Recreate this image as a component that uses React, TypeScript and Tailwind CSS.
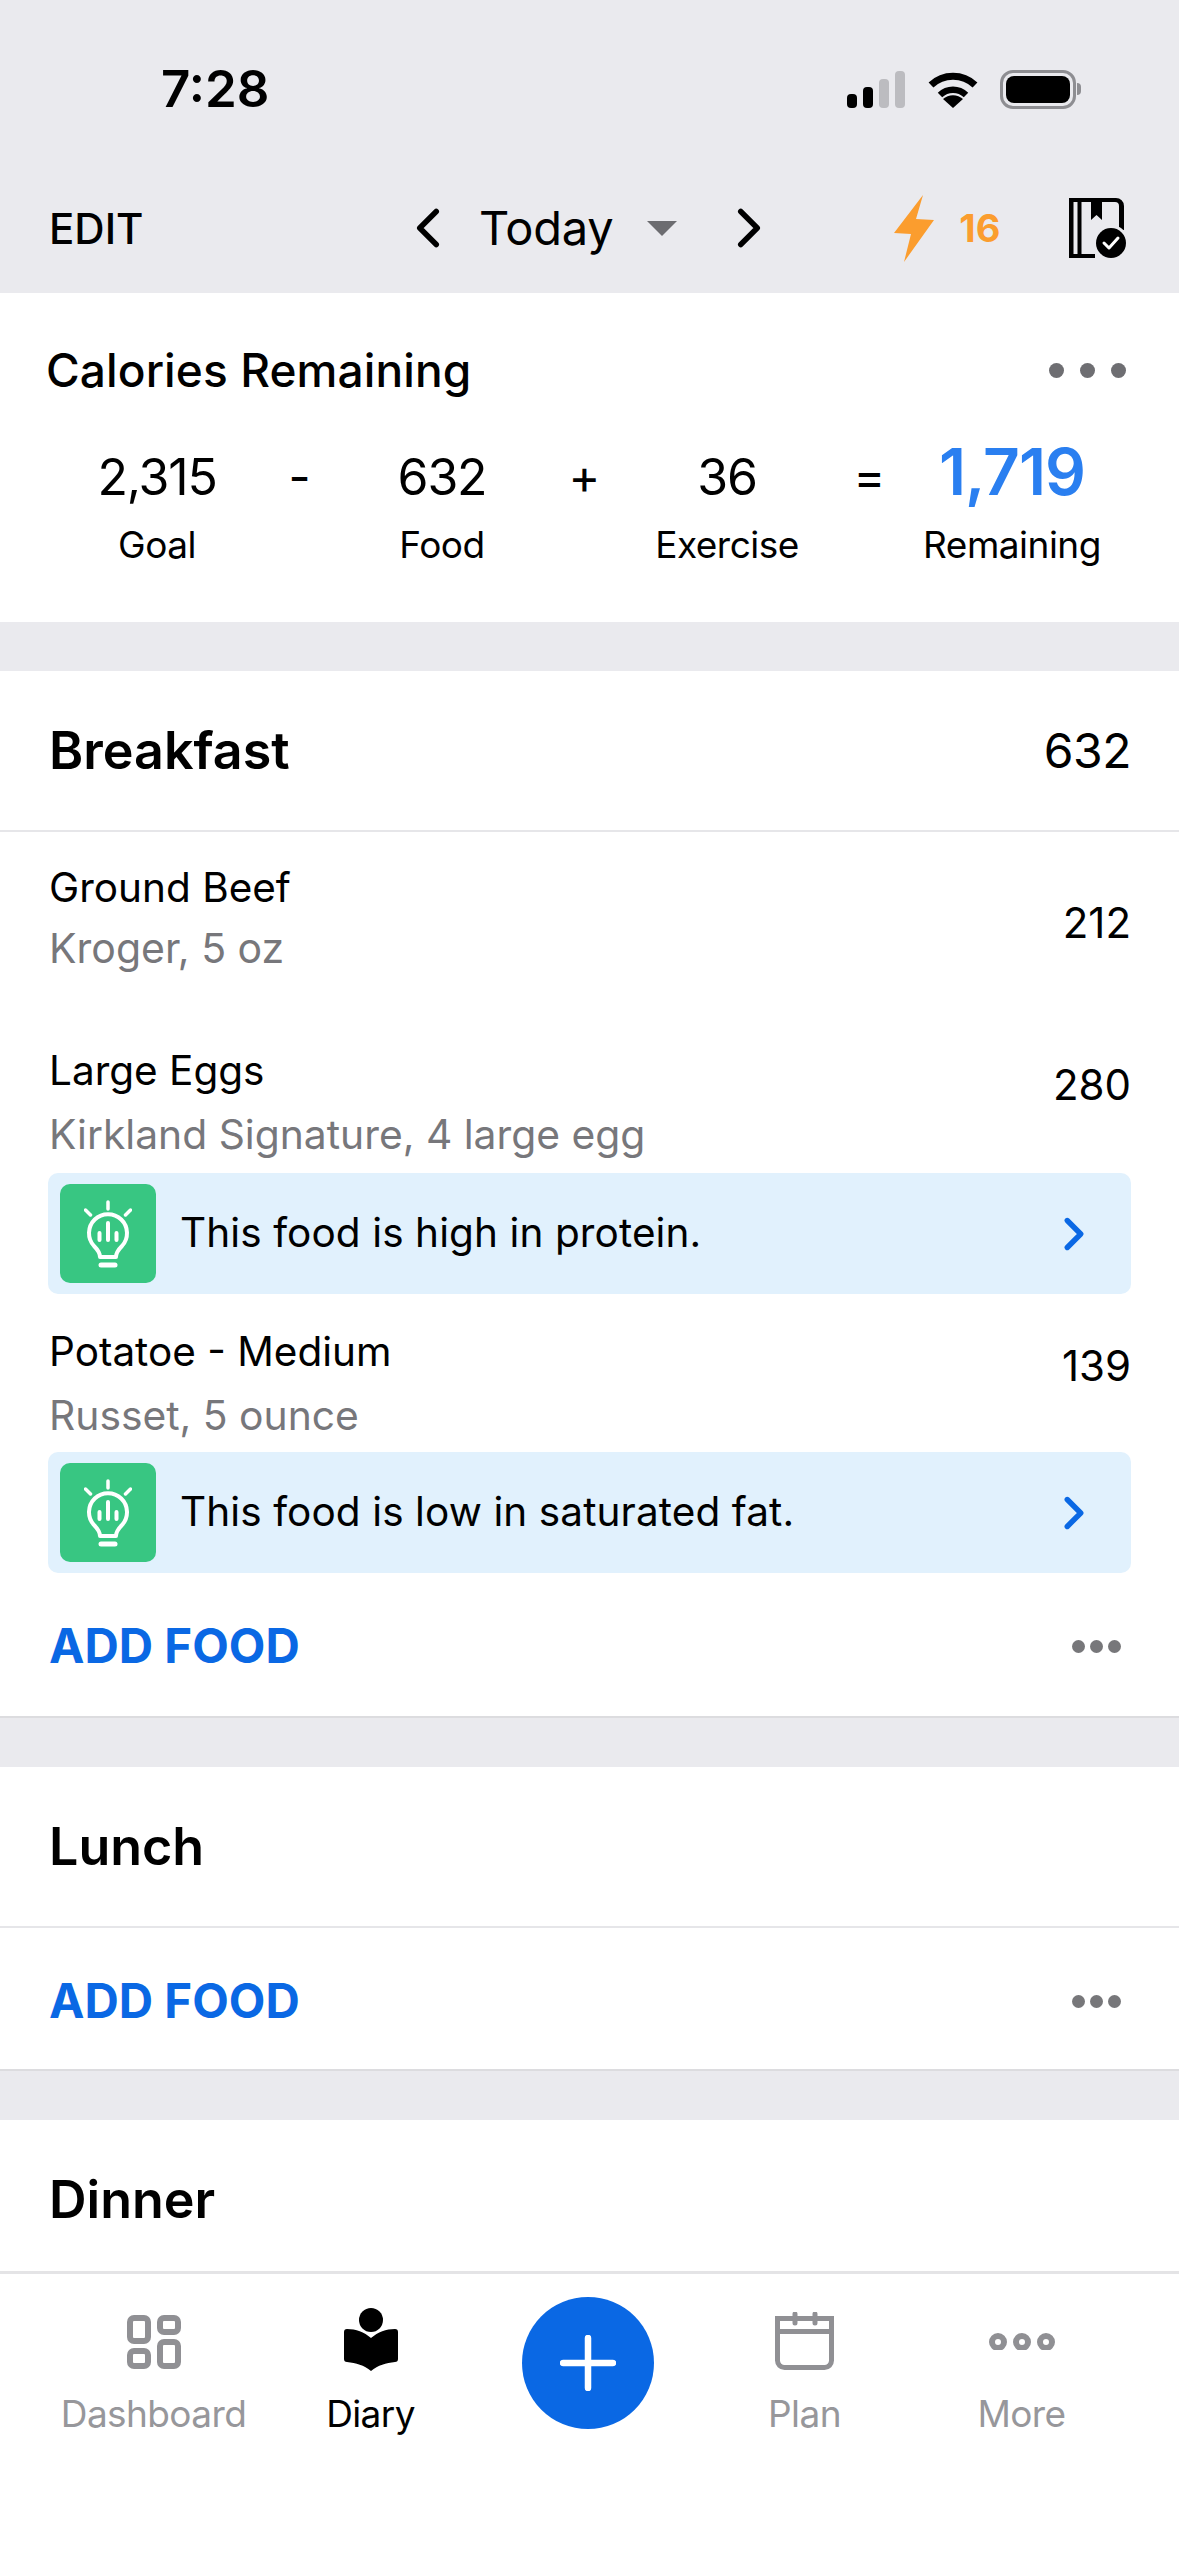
import React from "react";
import { ChevronLeft, ChevronRight } from "lucide-react";

const Spacer = () => <div className="h-[49px] bg-[#eaeaee]" />;

const Bulb = () => (
  <svg viewBox="0 0 48 68" className="w-[48px] h-[68px]" fill="none" stroke="white" strokeLinecap="round">
    <path d="M24 2v7M1.500 10l5 5M46.500 10l-5 5" strokeWidth="3.500" />
    <path
      d="M16 57c0-5-3-8-6-11a19 19 0 1 1 28 0c-3 3-6 6-6 11z"
      strokeWidth="4"
      strokeLinejoin="round"
    />
    <path d="M17 65h14" strokeWidth="5" />
    <path d="M15.500 33v7M24 23v17M32.500 33v7" strokeWidth="4" />
  </svg>
);

const TipBanner = ({ text }: { text: string }) => (
  <div className="mx-[48px] h-[121px] bg-[#e1f1fd] rounded-[10px] flex items-center pl-[12px] pr-[30px]">
    <div className="w-[96px] h-[99px] bg-[#38c682] rounded-[10px] flex items-center justify-center">
      <Bulb />
    </div>
    <span className="ml-[24px] flex-1 text-[40.5px] tracking-[0.1px] text-black">{text}</span>
    <ChevronRight className="w-[54px] h-[54px] text-[#0a68e4]" strokeWidth={2.4} />
  </div>
);

const AddFoodRow = () => (
  <div className="h-[143px] flex items-center justify-between pl-[49px] pr-[58px] pt-[3px]">
    <span className="text-[47.5px] font-bold text-[#0a68e4]">ADD FOOD</span>
    <div className="flex gap-[5px]">
      <span className="w-[13px] h-[13px] rounded-full bg-[#77777a]" />
      <span className="w-[13px] h-[13px] rounded-full bg-[#77777a]" />
      <span className="w-[13px] h-[13px] rounded-full bg-[#77777a]" />
    </div>
  </div>
);

const SectionHead = ({ title, cals }: { title: string; cals?: string }) => (
  <div className="h-[161px] flex items-center justify-between pl-[49px] pr-[48px] border-b-2 border-[#e6e6e9]">
    <span className="text-[52px] font-semibold text-black">{title}</span>
    {cals && <span className="text-[48px] tracking-[-0.5px] text-black">{cals}</span>}
  </div>
);

const Stat = ({ value, label, blue }: { value: string; label: string; blue?: boolean }) => (
  <div className="w-[200px] flex flex-col items-center">
    <span
      className={
        blue
          ? "h-[72px] text-[64px] leading-[62px] font-semibold tracking-[-1px] text-[#2a7ff0]"
          : "h-[72px] text-[50px] leading-[72px] tracking-[-1.2px] text-black"
      }
    >
      {value}
    </span>
    <span className="mt-[9px] text-[37px] leading-[46px] tracking-[-0.5px] text-black">{label}</span>
  </div>
);

const Op = ({ children }: { children: React.ReactNode }) => (
  <span className="w-[85px] text-center text-[48px] leading-[72px] self-start text-black">{children}</span>
);

const TabItem = ({ label, icon, active }: { label: string; icon: React.ReactNode; active?: boolean }) => (
  <div className="w-[217px] flex flex-col items-center">
    <div className="h-[88px] flex items-end justify-center">{icon}</div>
    <span
      className={
        active
          ? "mt-[19px] text-[37px] leading-[48px] tracking-[-0.6px] text-black"
          : "mt-[19px] text-[37px] leading-[48px] tracking-[-0.6px] text-[#97979b]"
      }
    >
      {label}
    </span>
  </div>
);

export default function App() {
  return (
    <div
      className="w-[1179px] h-[2556px] flex flex-col overflow-hidden bg-white"
      style={{ fontFamily: "Inter, 'Noto Sans', sans-serif" }}
    >
      {/* Status bar + nav */}
      <div className="h-[293px] shrink-0 bg-[#eaeaee] flex flex-col">
        <div className="h-[178px] flex items-center justify-between pl-[161px] pr-[98px]">
          <span className="text-[51px] font-semibold text-black">7:28</span>
          <div className="flex items-center">
            <svg viewBox="0 0 58 37" className="w-[58px] h-[37px]">
              <rect x="0" y="23" width="10" height="14" rx="4" fill="#000" />
              <rect x="16" y="16" width="10" height="21" rx="4" fill="#000" />
              <rect x="32" y="8" width="10" height="29" rx="4" fill="#bcbcc0" />
              <rect x="48" y="0" width="10" height="37" rx="4" fill="#bcbcc0" />
            </svg>
            <svg viewBox="0 0 50 37" className="ml-[23px] w-[50px] h-[37px]" fill="none" stroke="#000">
              <path d="M3 14a32 32 0 0 1 44 0" strokeWidth="7" />
              <path d="M12 24a19 19 0 0 1 26 0" strokeWidth="6.5" />
              <path d="M25 37l-10-9a15 15 0 0 1 20 0z" fill="#000" stroke="none" />
            </svg>
            <div className="ml-[22px] flex items-center">
              <div className="w-[76px] h-[39px] rounded-[13px] border-[3px] border-[#8e8e92] p-[3px]">
                <div className="w-full h-full rounded-[8px] bg-black" />
              </div>
              <div className="w-[4px] h-[12px] ml-[1px] rounded-r-full bg-[#8e8e92]" />
            </div>
          </div>
        </div>
        <div className="h-[100px] flex items-center pl-[49px]">
          <span className="text-[42px] font-medium text-black w-[346px]">EDIT</span>
          <ChevronLeft className="w-[66px] h-[66px] text-black" strokeWidth={2} />
          <span className="ml-[18px] text-[47px] tracking-[-0.3px] text-black">Today</span>
          <span className="ml-[34px] w-0 h-0 border-x-[15px] border-x-transparent border-t-[15px] border-t-[#6c6c70]" />
          <ChevronRight className="ml-[39px] w-[66px] h-[66px] text-black" strokeWidth={2} />
          <svg viewBox="0 0 40 67" className="ml-[112px] w-[40px] h-[67px]" fill="#fb9d2e">
            <path d="M29 0L0 38l17 1-7 28L40 25l-18-1z" />
          </svg>
          <span className="ml-[25px] text-[38px] font-bold text-[#fb9d2e]">16</span>
          <svg viewBox="0 0 57 60" className="ml-[69px] w-[57px] h-[60px]">
            <path
              d="M0 0h47a8 8 0 0 1 8 8v24h-5V8a4 4 0 0 0-4-4H33v18l-5.500-5-5.500 5V4h-9.500v52H26v4H0zM4.500 4v52h4V4z"
              fill="#000"
              fillRule="evenodd"
            />
            <circle cx="42" cy="45" r="18" fill="#eaeaee" />
            <circle cx="42" cy="45" r="15" fill="#000" />
            <path d="M35 45l5 5 9-10" stroke="#fff" strokeWidth="3" fill="none" strokeLinecap="round" strokeLinejoin="round" />
          </svg>
        </div>
      </div>

      <main className="flex-1 min-h-0 overflow-hidden">
        {/* Calories remaining */}
        <div className="h-[329px] bg-white pt-[49px]">
          <div className="flex items-center justify-between pl-[46px] pr-[53px]">
            <span className="text-[46px] leading-[56px] tracking-[0.1px] text-black font-medium">Calories Remaining</span>
            <div className="flex gap-[16px]">
              <span className="w-[15px] h-[15px] rounded-full bg-[#6e6e72]" />
              <span className="w-[15px] h-[15px] rounded-full bg-[#6e6e72]" />
              <span className="w-[15px] h-[15px] rounded-full bg-[#6e6e72]" />
            </div>
          </div>
          <div className="mt-[43px] pl-[57px] flex items-start">
            <Stat value="2,315" label="Goal" />
            <Op>-</Op>
            <Stat value="632" label="Food" />
            <Op>+</Op>
            <Stat value="36" label="Exercise" />
            <Op>=</Op>
            <Stat value="1,719" label="Remaining" blue />
          </div>
        </div>
        <Spacer />

        {/* Breakfast */}
        <SectionHead title="Breakfast" cals="632" />
        <div className="h-[173px] flex items-center justify-between pl-[49px] pr-[48px] pb-[1px]">
          <div className="flex flex-col">
            <span className="text-[40.5px] leading-[56px] text-black">Ground Beef</span>
            <span className="mt-[4px] text-[41px] leading-[56px] text-[#77777b]">Kroger, 5 oz</span>
          </div>
          <span className="mt-[9px] text-[42px] text-black">212</span>
        </div>
        <div className="h-[168px] flex justify-between pl-[49px] pr-[48px] pt-[38px]">
          <div className="flex flex-col">
            <span className="text-[40.5px] leading-[56px] text-black">Large Eggs</span>
            <span className="mt-[7px] text-[40.8px] leading-[56px] text-[#77777b]">Kirkland Signature, 4 large egg</span>
          </div>
          <span className="mt-[14px] text-[42px] leading-[56px] text-black">280</span>
        </div>
        <TipBanner text="This food is high in protein." />
        <div className="h-[158px] flex justify-between pl-[49px] pr-[48px] pt-[30px]">
          <div className="flex flex-col">
            <span className="text-[40.5px] leading-[56px] text-black">Potatoe - Medium</span>
            <span className="mt-[7px] text-[40.8px] leading-[56px] text-[#77777b]">Russet, 5 ounce</span>
          </div>
          <span className="mt-[14px] text-[42px] leading-[56px] text-black">139</span>
        </div>
        <TipBanner text="This food is low in saturated fat." />
        <div className="border-b-2 border-[#dcdcdf] h-[145px]">
          <AddFoodRow />
        </div>
        <Spacer />

        {/* Lunch */}
        <SectionHead title="Lunch" />
        <div className="border-b-2 border-[#dcdcdf] h-[143px]">
          <AddFoodRow />
        </div>
        <Spacer />

        {/* Dinner */}
        <SectionHead title="Dinner" />
      </main>

      {/* Tab bar */}
      <div className="h-[285px] shrink-0 bg-white border-t-[3px] border-[#e4e4e6] flex items-start pt-[9px] pl-[45px]">
        <TabItem
          label="Dashboard"
          icon={
            <svg viewBox="0 0 54 54" className="w-[54px] h-[54px] mb-[2px]" fill="none" stroke="#909094" strokeWidth="6">
              <rect x="3" y="3" width="18" height="23" rx="4" />
              <rect x="33" y="3" width="18" height="14" rx="4" />
              <rect x="3" y="36" width="18" height="15" rx="4" />
              <rect x="33" y="27" width="18" height="24" rx="4" />
            </svg>
          }
        />
        <TabItem
          active
          label="Diary"
          icon={
            <svg viewBox="0 0 54 63" className="w-[54px] h-[63px]" fill="#000">
              <circle cx="27" cy="12" r="12" />
              <path d="M3 21c9 0 17 3 24 9 7-6 15-9 24-9a3 3 0 0 1 3 3v27a3 3 0 0 1-3 3c-9 1-17 3-24 9-7-6-15-8-24-9a3 3 0 0 1-3-3V24a3 3 0 0 1 3-3z" />
            </svg>
          }
        />
        <div className="w-[217px] flex justify-center pt-[14px]">
          <div className="w-[132px] h-[132px] rounded-full bg-[#0a68e4] flex items-center justify-center">
            <svg viewBox="0 0 56 56" className="w-[56px] h-[56px]" stroke="#fff" strokeWidth="6.500" strokeLinecap="round">
              <path d="M28 3v50M3 28h50" />
            </svg>
          </div>
        </div>
        <TabItem
          label="Plan"
          icon={
            <svg viewBox="0 0 59 58" className="w-[59px] h-[58px] mb-[1px]" fill="none" stroke="#909094" strokeWidth="5">
              <path d="M2.500 6.500h54v42a7 7 0 0 1-7 7h-40a7 7 0 0 1-7-7z" />
              <path d="M2.500 19.500h54" />
              <path d="M20 2v9M40 2v9" strokeLinecap="round" />
            </svg>
          }
        />
        <TabItem
          label="More"
          icon={
            <svg viewBox="0 0 66 17" className="w-[66px] h-[17px] mb-[21px]" fill="none" stroke="#909094" strokeWidth="6">
              <circle cx="9" cy="9" r="6" />
              <circle cx="33" cy="9" r="6" />
              <circle cx="57" cy="9" r="6" />
            </svg>
          }
        />
      </div>
    </div>
  );
}
